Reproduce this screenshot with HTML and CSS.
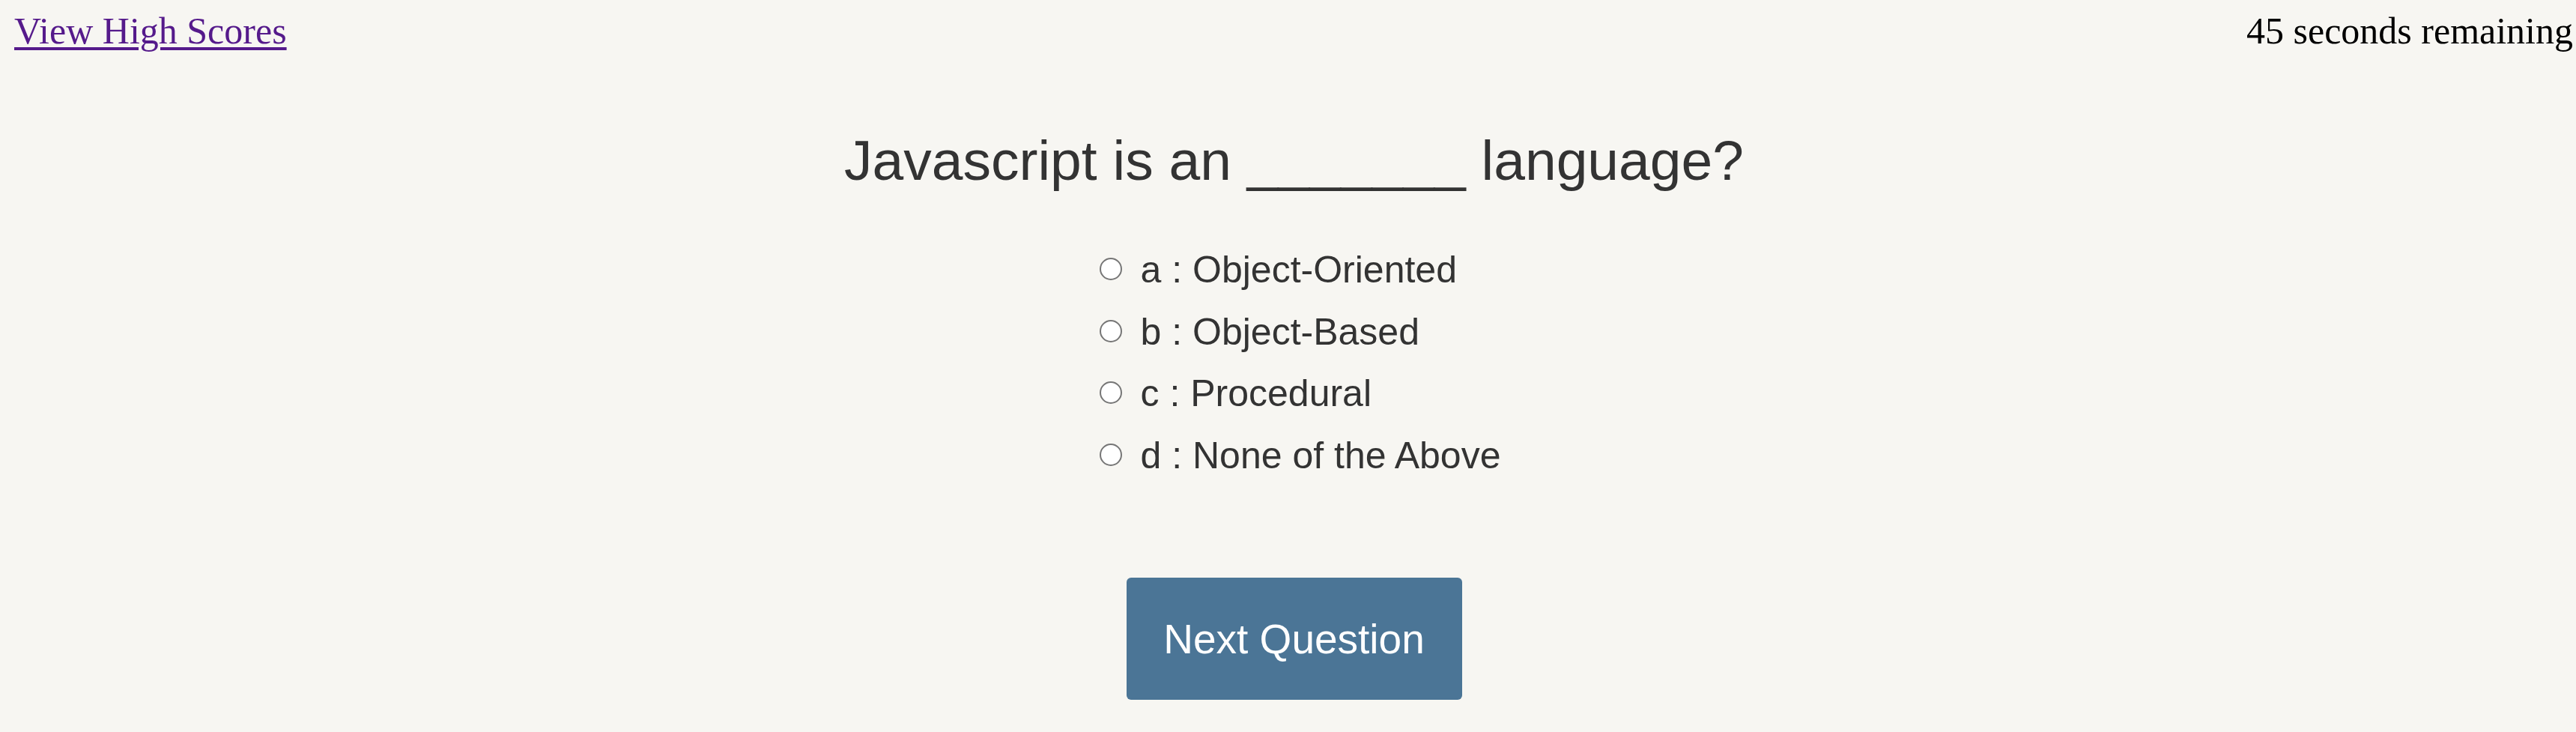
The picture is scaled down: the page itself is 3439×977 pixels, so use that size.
FILE: index.html
```html
<!DOCTYPE html>
<html lang="en">
<head>
<meta charset="utf-8">
<title>Quiz</title>
<link rel="stylesheet" href="styles.css">
</head>
<body>
<header class="topbar">
  <a class="scores-link" href="#">View High Scores</a>
  <span class="timer">45 seconds remaining</span>
</header>
<main class="quiz">
  <h1 class="question">Javascript is an _______ language?</h1>
  <div class="options">
    <label class="option"><input type="radio" name="answer" class="radio"><span>a : Object-Oriented</span></label>
    <label class="option"><input type="radio" name="answer" class="radio"><span>b : Object-Based</span></label>
    <label class="option"><input type="radio" name="answer" class="radio"><span>c : Procedural</span></label>
    <label class="option"><input type="radio" name="answer" class="radio"><span>d : None of the Above</span></label>
  </div>
  <button class="next-btn" type="button">Next Question</button>
</main>
</body>
</html>
```
FILE: styles.css
```css
html, body {
  margin: 0;
  padding: 0;
  background: #f7f6f2;
}

.topbar {
  display: flex;
  justify-content: space-between;
  align-items: baseline;
  padding: 13px 4px 0 19px;
  font-family: "Liberation Serif", "Times New Roman", serif;
  font-size: 50px;
  line-height: 56px;
  color: #000;
}

.scores-link {
  color: #551a8b;
  text-decoration: underline;
  text-decoration-thickness: 4px;
  text-underline-offset: 5px;
}

.quiz {
  display: flex;
  flex-direction: column;
  align-items: center;
  padding-left: 16px;
  font-family: "Liberation Sans", Arial, sans-serif;
  color: #333333;
}

.question {
  margin: 102px 0 0 0;
  font-size: 75px;
  font-weight: normal;
  line-height: 86px;
  text-align: center;
}

.options {
  display: flex;
  flex-direction: column;
  gap: 25px;
  margin-top: 75px;
}

.option {
  display: flex;
  align-items: center;
  gap: 25px;
  font-size: 50px;
  line-height: 57.5px;
}

.radio {
  appearance: none;
  -webkit-appearance: none;
  width: 30px;
  height: 30px;
  margin: -3px 0 0 16px;
  border: 2.5px solid #767676;
  border-radius: 50%;
  background: #ffffff;
  box-sizing: border-box;
  flex: none;
}

.next-btn {
  margin: 134px 0 0 0;
  width: 448px;
  height: 163px;
  border: none;
  border-radius: 6px;
  background: #4b7596;
  color: #ffffff;
  font-family: "Liberation Sans", Arial, sans-serif;
  font-size: 55px;
  padding: 0;
}
```
